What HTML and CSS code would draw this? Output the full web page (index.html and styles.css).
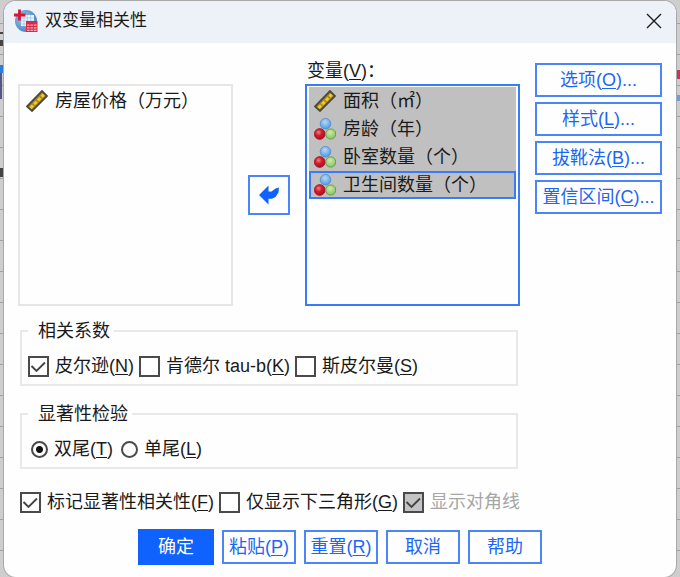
FILE: index.html
```html
<!DOCTYPE html>
<html lang="zh-CN">
<head>
  <meta charset="UTF-8" />
  <meta name="viewport" content="width=device-width, initial-scale=1.0"/>
  <title>双变量相关性</title>
  <link rel="stylesheet" href="styles.css">
</head>
<body>
  <svg class="sprite" aria-hidden="true">
    <defs>
      <radialGradient id="blue" cx="0.45" cy="0.35" r="0.6"><stop offset="0" stop-color="#b4d8fa"/><stop offset="1" stop-color="#5a9de0"/></radialGradient>
      <radialGradient id="red" cx="0.4" cy="0.35" r="0.6"><stop offset="0" stop-color="#ee7f84"/><stop offset="0.5" stop-color="#cf1f2d"/><stop offset="1" stop-color="#b30f20"/></radialGradient>
      <radialGradient id="green" cx="0.45" cy="0.35" r="0.6"><stop offset="0" stop-color="#cdeaa9"/><stop offset="1" stop-color="#8cc665"/></radialGradient>
      <radialGradient id="globe" cx="0.4" cy="0.4" r="0.6"><stop offset="0" stop-color="#a9cdea"/><stop offset="1" stop-color="#4a86c2"/></radialGradient>
    </defs>
    <symbol id="scale" viewBox="0 0 22 22">
      <path d="M1 16.5 16 1 21 6 6 21Z" fill="#9c8a36" stroke="#4d4a3c" stroke-width="1.8"/>
      <path d="M3.5 17 6 14.5 8 16.5 5.5 19ZM7.2 13.2 9.7 10.7 11.7 12.7 9.2 15.2ZM10.9 9.4 13.4 6.9 15.4 8.9 12.9 11.4ZM14.6 5.6 16.6 3.6 18.8 5.8 16.6 7.8Z" fill="#fcc81c"/>
    </symbol>
    <symbol id="nominal" viewBox="0 0 22 22">
      <circle cx="11.5" cy="5.7" r="5.3" fill="url(#blue)" stroke="#4c8bd0" stroke-width="0.8"/>
      <circle cx="5.7" cy="16" r="5.4" fill="url(#red)" stroke="#a31625" stroke-width="0.8"/>
      <circle cx="16.7" cy="16" r="5.1" fill="url(#green)" stroke="#5c9d42" stroke-width="0.9"/>
    </symbol>
  </svg>

  <div class="window" role="dialog" aria-labelledby="title">
    <header class="titlebar">
      <svg class="app-icon" viewBox="0 0 24 24" aria-hidden="true">
        <circle cx="12" cy="12" r="11" fill="url(#globe)"/>
        <path d="M7 6H20V17H7Z" fill="#eef5fb"/>
        <path d="M7 9H20M7 12H20M7 15H20M10 6V17M13.3 6V17M16.6 6V17" stroke="#9cc1e0" stroke-width="0.7"/>
        <path d="M5.5 0.5V11.5M0 6H11.5" stroke="#d81638" stroke-width="2.8"/>
        <path d="M12 12H23.5V23H12Z" fill="#d92b45"/>
        <path d="M13 16.2H22.5M13 18.8H22.5M13 21.4H22.5" stroke="#f3b5be" stroke-width="1.2"/>
        <path d="M16 14.5V23M19.4 14.5V23" stroke="#d92b45" stroke-width="0.9"/>
      </svg>
      <h1 id="title">双变量相关性</h1>
      <button class="close" aria-label="关闭">
        <svg viewBox="0 0 16 16" aria-hidden="true"><path d="M1 1 15 15M15 1 1 15" stroke="#1c1c1c" stroke-width="1.4"/></svg>
      </button>
    </header>

    <main class="content">
      <div class="settings">
        <div class="picker">
          <ul class="list source" role="listbox" aria-label="可用变量">
            <li role="option"><svg class="icon"><use href="#scale"/></svg>房屋价格（万元）</li>
          </ul>
          <button class="move" aria-label="移动">
            <svg viewBox="0 0 20 20" aria-hidden="true"><path d="M0 10 9.5 0.5V6.5L12.5 6.5 16.5 3.5 20 2.5 19.5 7.5 16.5 12 13 13.8H9.5V19.5Z" fill="#0f62fe"/></svg>
          </button>
          <div class="list-label" id="vars">变量(<u>V</u>)：</div>
          <ul class="list target" role="listbox" aria-labelledby="vars">
            <li role="option" aria-selected="true"><svg class="icon"><use href="#scale"/></svg>面积（㎡）</li>
            <li role="option" aria-selected="true"><svg class="icon"><use href="#nominal"/></svg>房龄（年）</li>
            <li role="option" aria-selected="true"><svg class="icon"><use href="#nominal"/></svg>卧室数量（个）</li>
            <li class="focused" role="option" aria-selected="true"><svg class="icon"><use href="#nominal"/></svg>卫生间数量（个）</li>
          </ul>
        </div>

        <fieldset>
          <legend>相关系数</legend>
          <div class="row">
            <label><input type="checkbox" checked><span>皮尔逊(<u>N</u>)</span></label>
            <label><input type="checkbox"><span>肯德尔 tau-b(<u>K</u>)</span></label>
            <label><input type="checkbox"><span>斯皮尔曼(<u>S</u>)</span></label>
          </div>
        </fieldset>

        <fieldset>
          <legend>显著性检验</legend>
          <div class="row">
            <label><input type="radio" name="tail" checked><span>双尾(<u>T</u>)</span></label>
            <label><input type="radio" name="tail"><span>单尾(<u>L</u>)</span></label>
          </div>
        </fieldset>

        <div class="row flags">
          <label><input type="checkbox" checked><span>标记显著性相关性(<u>F</u>)</span></label>
          <label><input type="checkbox"><span>仅显示下三角形(<u>G</u>)</span></label>
          <label class="disabled"><input type="checkbox" checked disabled><span>显示对角线</span></label>
        </div>
      </div>

      <div class="side">
        <button class="btn">选项(<u>O</u>)...</button>
        <button class="btn">样式(<u>L</u>)...</button>
        <button class="btn">拔靴法(<u>B</u>)...</button>
        <button class="btn">置信区间(<u>C</u>)...</button>
      </div>
    </main>

    <footer class="actions">
      <button class="btn primary">确定</button>
      <button class="btn">粘贴(<u>P</u>)</button>
      <button class="btn">重置(<u>R</u>)</button>
      <button class="btn">取消</button>
      <button class="btn">帮助</button>
    </footer>
  </div>
</body>
</html>
```

FILE: styles.css
```css
* {
  box-sizing: border-box;
}

body {
  margin: 0;
  padding: 1px 4px 0;
  min-height: 100vh;
  display: flex;
  overflow: hidden;
  /* spreadsheet behind the dialog */
  background:
    linear-gradient(#2f7bd8, #2f7bd8) 0 65px / 4px 8px no-repeat,
    linear-gradient(#55558c, #55558c) 0 73px / 2px 26px no-repeat,
    linear-gradient(#444, #444) 0 168px / 3px 9px no-repeat,
    linear-gradient(#444, #444) 0 32px / 4px 2px no-repeat,
    linear-gradient(#444, #444) 0 40px / 4px 6px no-repeat,
    linear-gradient(#d2305c, #d2305c) 100% 70px / 3px 9px no-repeat,
    linear-gradient(#6ba0dc, #6ba0dc) 100% 95px / 3px 6px no-repeat,
    repeating-linear-gradient(#cecece 0 23px, #a2a2a2 23px 24px, #cecece 24px 31px);
  font: 18px/24px "Liberation Sans", "Noto Sans CJK SC", sans-serif;
  color: #1a1a1a;
}

button, input {
  font: inherit;
  margin: 0;
}

u {
  text-underline-offset: 2px;
  text-decoration-thickness: 1px;
}

.sprite {
  position: absolute;
  width: 0;
  height: 0;
}

.window {
  flex: 1;
  background: #fefefe;
  border-radius: 12px;
  box-shadow: 0 0 0 1px #a9a9a9;
  overflow: hidden;
}

.titlebar {
  display: flex;
  align-items: center;
  height: 42px;
  padding: 0 14px 2px 10px;
  background: #edf2f8;
}

.app-icon {
  width: 24px;
  height: 24px;
}

.titlebar h1 {
  flex: 1;
  margin: 0 0 0 7px;
  font-size: 17px;
  font-weight: normal;
}

.close {
  display: flex;
  padding: 0;
  border: 0;
  background: none;
}

.close svg {
  width: 16px;
  height: 16px;
}

.content {
  display: grid;
  grid-template-columns: minmax(0, 1fr) 127px;
  gap: 15px;
  padding: 17px 14px 0;
}

.picker {
  display: grid;
  grid-template-columns: 1fr 42px 1fr;
  grid-template-rows: 24px 222px;
  column-gap: 15px;
}

.list-label {
  grid-area: 1 / 3;
  padding-left: 2px;
  line-height: 22px;
}

.list {
  margin: 0;
  list-style: none;
}

.source {
  grid-area: 2 / 1;
  padding: 1px;
  border: 2px solid #e6e6e6;
}

.target {
  grid-area: 2 / 3;
  padding: 1px 2px;
  border: 2px solid #3a7bf8;
}

.list li {
  display: flex;
  align-items: center;
  gap: 7px;
  height: 28px;
  padding-left: 5px;
  white-space: nowrap;
}

.list li[aria-selected="true"] {
  background: #c0c0c0;
}

.list .focused {
  padding-left: 3px;
  border: 2px solid #3a7bf8;
}

.icon {
  width: 22px;
  height: 22px;
}

.move {
  grid-area: 2 / 2;
  align-self: center;
  display: flex;
  align-items: center;
  justify-content: center;
  height: 40px;
  padding: 0;
  border: 2px solid #4a86fa;
  background: #fefefe;
}

.move svg {
  width: 20px;
  height: 20px;
}

fieldset {
  margin: 13px 2px 0;
  padding: 11px 6px 6px;
  border: 2px solid #e9e9e9;
}

fieldset + fieldset {
  margin-top: 16px;
}

legend {
  padding: 0 4px 0 10px;
}

.row {
  display: flex;
  gap: 5px;
  height: 24px;
  white-space: nowrap;
}

.flags {
  margin: 21px 2px 0;
}

label {
  display: flex;
  align-items: center;
  gap: 6px;
}

input {
  appearance: none;
  background: #fff;
  border: 2px solid #4a4a4a;
}

input[type="checkbox"] {
  width: 21px;
  height: 21px;
}

input[type="checkbox"]:checked {
  background: #fff url("data:image/svg+xml,%3Csvg xmlns='http://www.w3.org/2000/svg' viewBox='0 0 17 17'%3E%3Cpath d='M1.5 8 6.5 13 15 4.5' fill='none' stroke='%23444' stroke-width='1.9'/%3E%3C/svg%3E");
}

input[type="checkbox"]:disabled {
  background-color: #c4c4c4;
}

.disabled {
  color: #a6a6a6;
}

input[type="radio"] {
  width: 17px;
  height: 17px;
  margin: 0 0 0 3px;
  border-radius: 50%;
}

input[type="radio"]:checked {
  background: radial-gradient(circle, #111 3px, #fff 4px);
}

.side {
  display: flex;
  flex-direction: column;
  gap: 5px;
  padding-top: 3px;
}

.btn {
  height: 34px;
  padding: 0;
  border: 2px solid #4a86fa;
  background: #fefefe;
  color: #1c66f5;
  white-space: nowrap;
}

.actions {
  display: flex;
  align-items: center;
  justify-content: center;
  gap: 8px;
  padding: 15px 14px 12px;
}

.actions .btn {
  width: 74px;
}

.actions .primary {
  width: 76px;
  height: 36px;
  border: 0;
  background: #0f62fe;
  color: #fff;
}
```
